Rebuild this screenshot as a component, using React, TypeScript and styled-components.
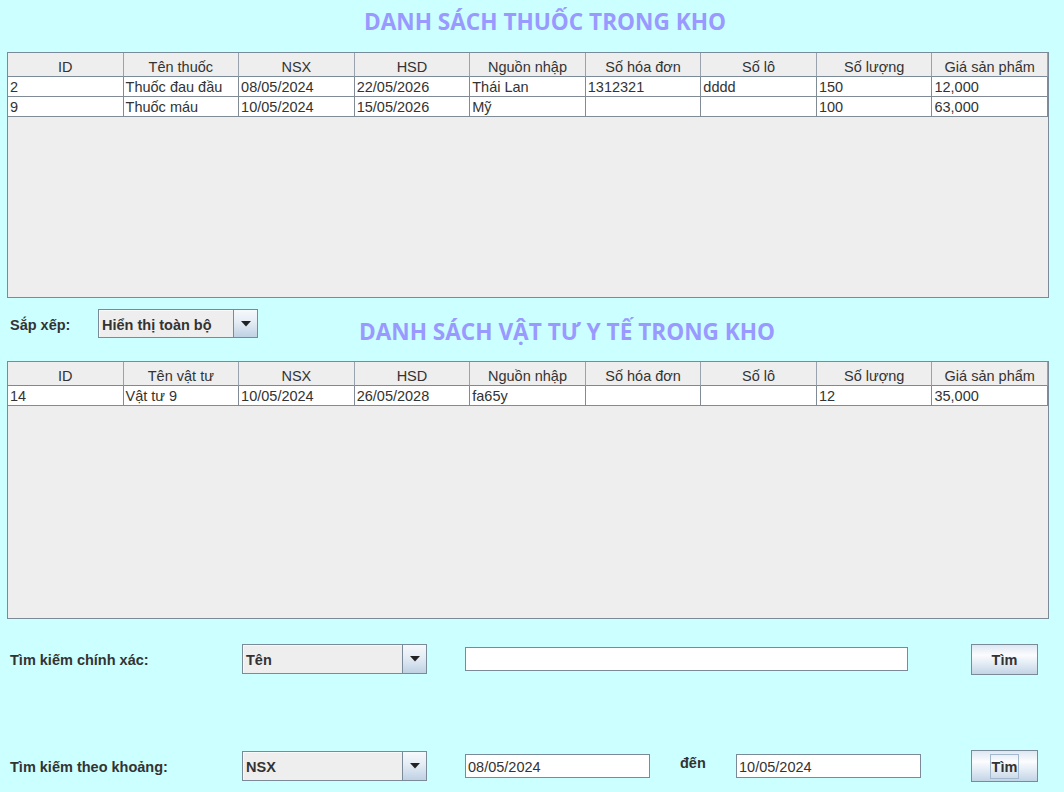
import React from "react";
import styled, { createGlobalStyle } from "styled-components";

const GlobalStyle = createGlobalStyle`
  html, body {
    margin: 0;
    padding: 0;
    background: #ccffff;
  }
  body {
    font-family: "Liberation Sans", Arial, sans-serif;
  }
`;

const Page = styled.div`
  width: 1064px;
  height: 792px;
  box-sizing: border-box;
  padding: 0 15px 0 7px;
  display: flex;
  flex-direction: column;
  background: #ccffff;
  overflow: hidden;
`;

const Title = styled.h1`
  margin: 0;
  font-family: "Open Sans", sans-serif;
  font-weight: 700;
  font-size: 22.6px;
  line-height: 22px;
  color: #9999ff;
  white-space: nowrap;
`;

const TopTitle = styled(Title)`
  padding: 11px 0 19px 34px;
  text-align: center;
`;

const SideTitle = styled(Title)`
  margin: 23px 0 0 101px;
`;

const TablePane = styled.div<{ $height: number }>`
  height: ${(p) => p.$height}px;
  box-sizing: border-box;
  border: 1px solid #7a8a99;
  background: #eeeeee;
  overflow: hidden;
  flex: none;
`;

const Grid = styled.div`
  display: grid;
  grid-template-columns: repeat(9, 1fr);
  font-family: "Liberation Sans", Arial, sans-serif;
  font-size: 14.5px;
  color: #333333;
`;

const HeadCell = styled.div`
  height: 24px;
  box-sizing: border-box;
  display: flex;
  align-items: center;
  justify-content: center;
  padding-top: 4px;
  background: #eeeeee;
  border-right: 1px solid #98a3ae;
  border-bottom: 1px solid #7a8a99;
  white-space: nowrap;
  overflow: hidden;
`;

const BodyCell = styled.div`
  height: 20px;
  box-sizing: border-box;
  padding: 1px 0 0 2px;
  line-height: 19px;
  background: #ffffff;
  border-right: 1px solid #808b96;
  border-bottom: 1px solid #808b96;
  white-space: nowrap;
  overflow: hidden;
`;

const SortRow = styled.div`
  height: 63px;
  display: flex;
  align-items: flex-start;
  flex: none;
`;

const SortGroup = styled.div`
  display: flex;
  align-items: center;
  padding-top: 11px;
`;

const FieldLabel = styled.span<{ $width: number }>`
  width: ${(p) => p.$width}px;
  box-sizing: border-box;
  padding: 2px 0 0 3px;
  font-family: "Liberation Sans", Arial, sans-serif;
  font-weight: 700;
  font-size: 14.5px;
  color: #333333;
  white-space: nowrap;
  flex: none;
`;

const Combo = styled.div<{ $width: number; $height: number }>`
  width: ${(p) => p.$width}px;
  height: ${(p) => p.$height}px;
  box-sizing: border-box;
  display: flex;
  border: 1px solid #7a8a99;
  background: #eeeeee;
  flex: none;
`;

const ComboValue = styled.span`
  flex: 1;
  display: flex;
  align-items: center;
  padding: 2px 0 0 3px;
  font-family: "Liberation Sans", Arial, sans-serif;
  font-weight: 700;
  font-size: 14.5px;
  color: #333333;
  border-right: 1px solid #7a8a99;
  box-shadow: inset 1px 1px 0 #f8f8f8;
  white-space: nowrap;
`;

const ComboArrow = styled.span`
  width: 23px;
  display: flex;
  align-items: center;
  justify-content: center;
  background: linear-gradient(to bottom, #f6f9fc 0%, #e4ecf4 45%, #bfd1e4 100%);
`;

const SearchArea = styled.div`
  display: flex;
  flex-direction: column;
  flex: none;
`;

const SearchRow = styled.div<{ $top: number; $height: number }>`
  margin-top: ${(p) => p.$top}px;
  height: ${(p) => p.$height}px;
  display: flex;
  align-items: center;
`;

const TextField = styled.div<{ $width: number; $gap: number }>`
  width: ${(p) => p.$width}px;
  height: 24px;
  margin-left: ${(p) => p.$gap}px;
  box-sizing: border-box;
  border: 1px solid #7a8a99;
  background: #ffffff;
  padding: 3px 0 0 2px;
  font-family: "Liberation Sans", Arial, sans-serif;
  font-size: 14.5px;
  line-height: 18px;
  color: #333333;
  flex: none;
`;

const Between = styled.span`
  width: 56px;
  margin: 0 0 6px 30px;
  font-family: "Liberation Sans", Arial, sans-serif;
  font-weight: 700;
  font-size: 14.5px;
  color: #333333;
  flex: none;
`;

const Button = styled.button<{ $gap: number; $height: number }>`
  margin: 0 0 0 ${(p) => p.$gap}px;
  width: 67px;
  height: ${(p) => p.$height}px;
  box-sizing: border-box;
  padding: 2px 0 0;
  border: 1px solid #7a8a99;
  background: linear-gradient(to bottom, #dde7f1 0%, #fbfcfe 35%, #e6eef6 60%, #c3d4e6 100%);
  display: flex;
  align-items: center;
  justify-content: center;
  font-family: "Liberation Sans", Arial, sans-serif;
  font-weight: 700;
  font-size: 14.5px;
  color: #333333;
  flex: none;
`;

const FocusRing = styled.span`
  border: 1px solid #a3b8cc;
  padding: 2px 1px 1px;
  line-height: 20px;
`;

const Arrow = () => (
  <svg width="10" height="6" viewBox="0 0 10 6">
    <polygon points="0,0 10,0 5,5.5" fill="#222222" />
  </svg>
);

type Row = string[];

const DataTable = ({ columns, rows, height }: { columns: string[]; rows: Row[]; height: number }) => (
  <TablePane $height={height}>
    <Grid>
      {columns.map((c) => (
        <HeadCell key={c}>{c}</HeadCell>
      ))}
      {rows.map((r, i) =>
        r.map((v, j) => <BodyCell key={`${i}-${j}`}>{v}</BodyCell>)
      )}
    </Grid>
  </TablePane>
);

const medCols = ["ID", "Tên thuốc", "NSX", "HSD", "Nguồn nhập", "Số hóa đơn", "Số lô", "Số lượng", "Giá sản phẩm"];
const medRows: Row[] = [
  ["2", "Thuốc đau đầu", "08/05/2024", "22/05/2026", "Thái Lan", "1312321", "dddd", "150", "12,000"],
  ["9", "Thuốc máu", "10/05/2024", "15/05/2026", "Mỹ", "", "", "100", "63,000"],
];
const supCols = ["ID", "Tên vật tư", "NSX", "HSD", "Nguồn nhập", "Số hóa đơn", "Số lô", "Số lượng", "Giá sản phẩm"];
const supRows: Row[] = [
  ["14", "Vật tư 9", "10/05/2024", "26/05/2028", "fa65y", "", "", "12", "35,000"],
];

export default function App() {
  return (
    <>
      <GlobalStyle />
      <Page>
        <TopTitle>DANH SÁCH THUỐC TRONG KHO</TopTitle>
        <DataTable columns={medCols} rows={medRows} height={246} />
        <SortRow>
          <SortGroup>
            <FieldLabel $width={91}>Sắp xếp:</FieldLabel>
            <Combo $width={160} $height={29}>
              <ComboValue>Hiển thị toàn bộ</ComboValue>
              <ComboArrow>
                <Arrow />
              </ComboArrow>
            </Combo>
          </SortGroup>
          <SideTitle>DANH SÁCH VẬT TƯ Y TẾ TRONG KHO</SideTitle>
        </SortRow>
        <DataTable columns={supCols} rows={supRows} height={258} />
        <SearchArea>
          <SearchRow $top={24} $height={32}>
            <FieldLabel $width={235}>Tìm kiếm chính xác:</FieldLabel>
            <Combo $width={185} $height={30}>
              <ComboValue>Tên</ComboValue>
              <ComboArrow>
                <Arrow />
              </ComboArrow>
            </Combo>
            <TextField $width={443} $gap={38} />
            <Button $gap={63} $height={31}>Tìm</Button>
          </SearchRow>
          <SearchRow $top={74} $height={33}>
            <FieldLabel $width={235}>Tìm kiếm theo khoảng:</FieldLabel>
            <Combo $width={185} $height={30}>
              <ComboValue>NSX</ComboValue>
              <ComboArrow>
                <Arrow />
              </ComboArrow>
            </Combo>
            <TextField $width={185} $gap={38}>08/05/2024</TextField>
            <Between>đến</Between>
            <TextField $width={185} $gap={0}>10/05/2024</TextField>
            <Button $gap={50} $height={32}>
              <FocusRing>Tìm</FocusRing>
            </Button>
          </SearchRow>
        </SearchArea>
      </Page>
    </>
  );
}
